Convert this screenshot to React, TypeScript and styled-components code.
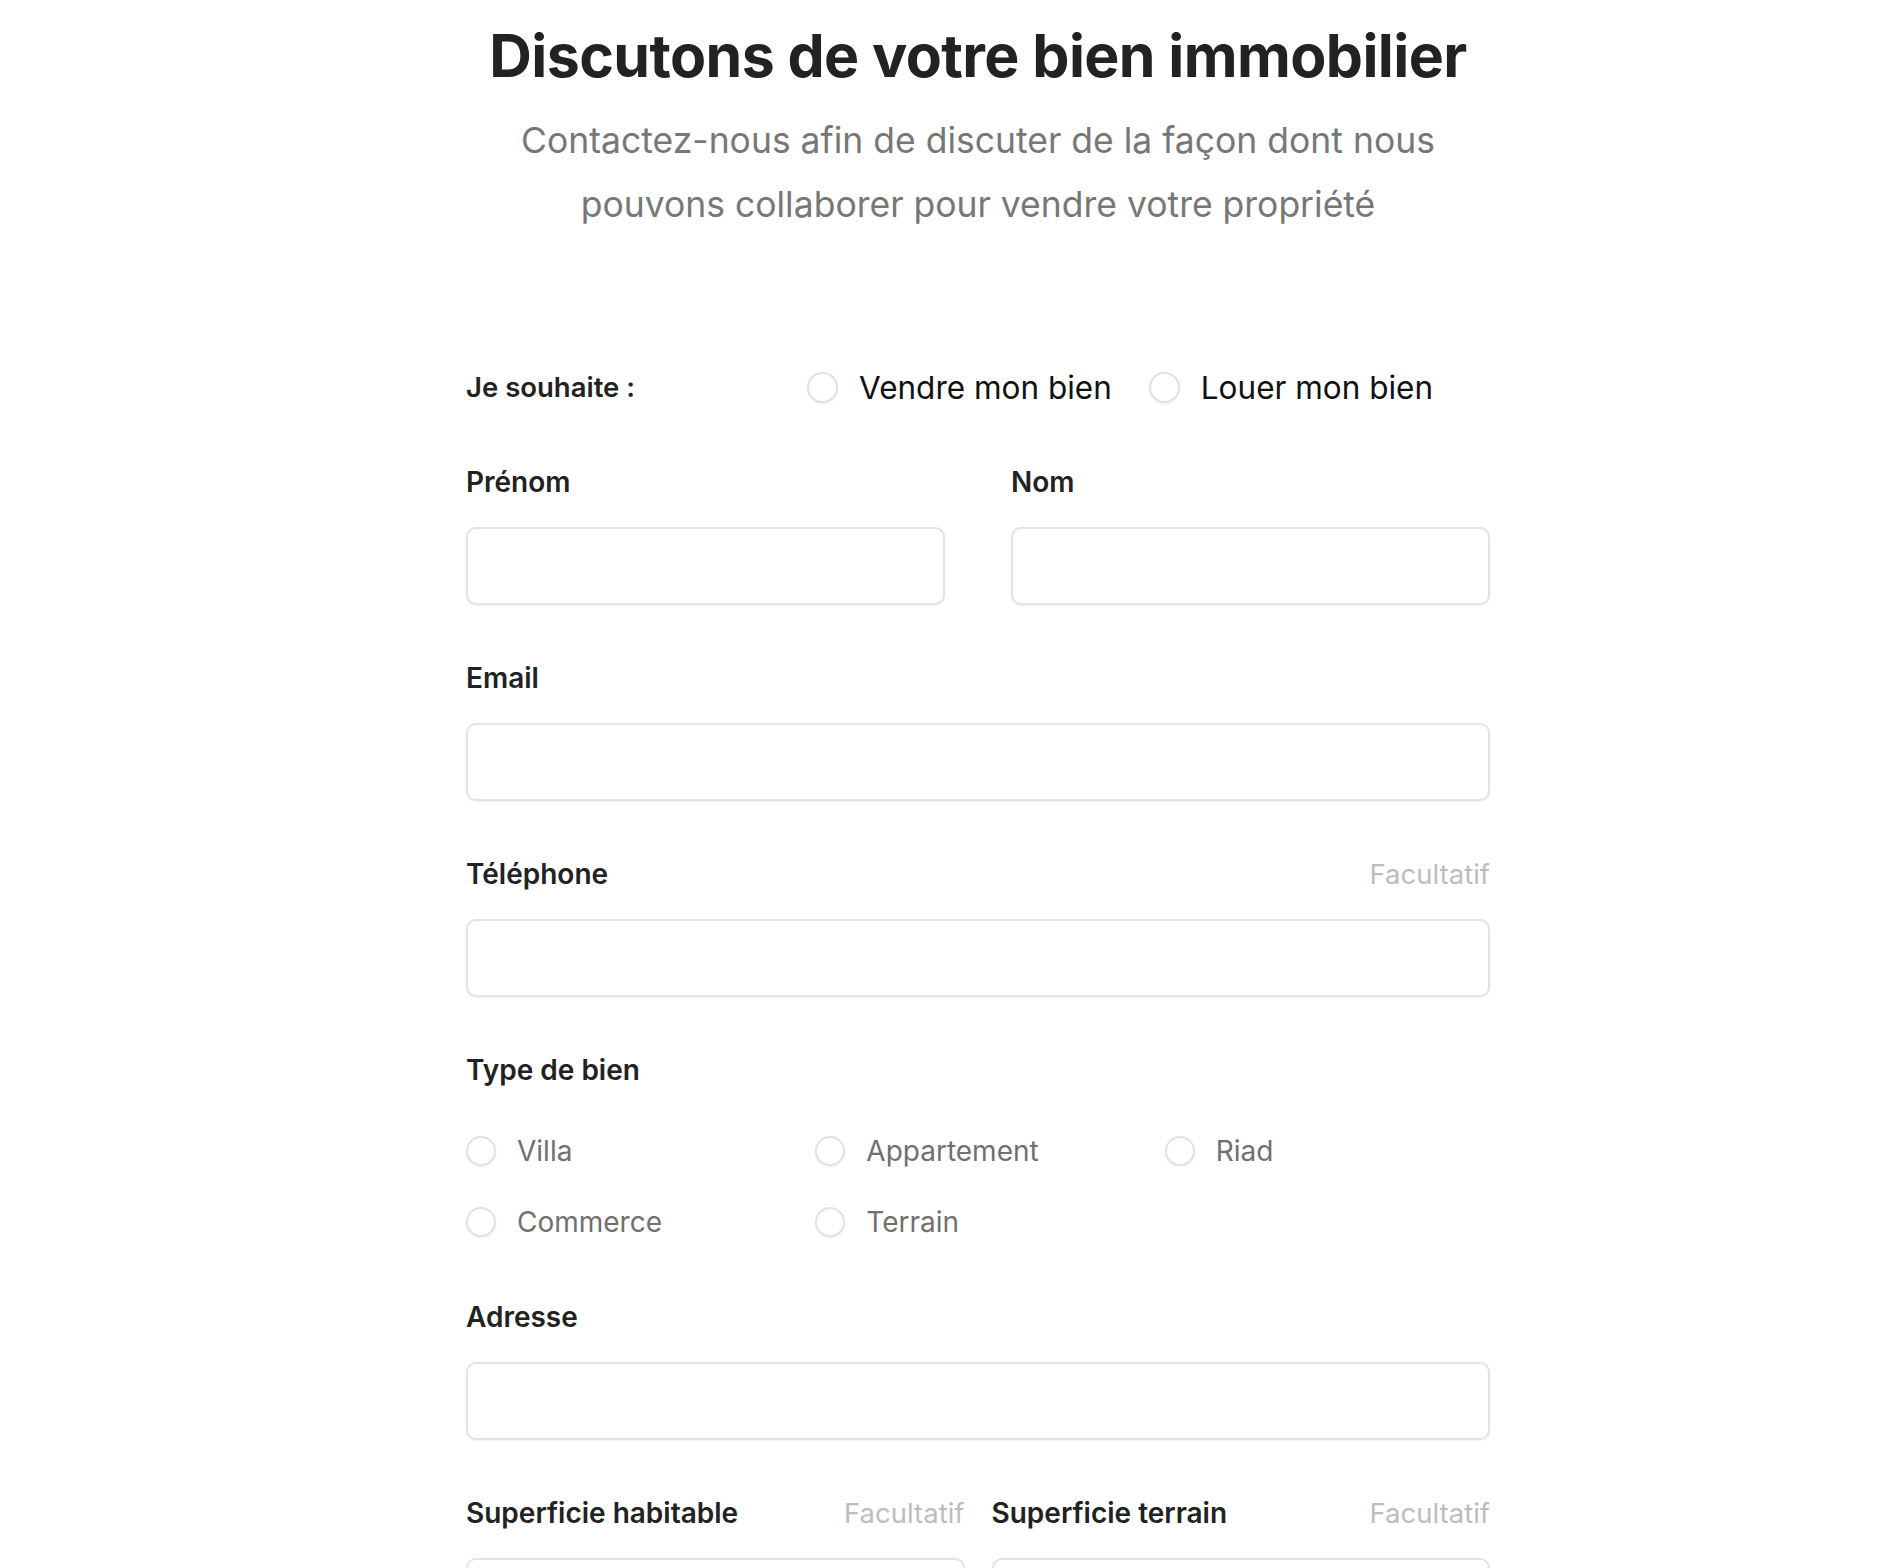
import React from "react";
import styled, { createGlobalStyle } from "styled-components";

const GlobalStyle = createGlobalStyle`
  html, body {
    margin: 0;
    padding: 0;
    background: #ffffff;
  }
  body {
    font-family: "Inter", "Liberation Sans", sans-serif;
    color: #222222;
    -webkit-font-smoothing: antialiased;
  }
  * { box-sizing: border-box; }
`;

const Page = styled.div`
  padding: 22px 0 80px 52px;
`;

const Container = styled.div`
  width: 1024px;
  margin: 0 auto;
`;

const Title = styled.h1`
  margin: 0;
  font-size: 59px;
  line-height: 68px;
  font-weight: 700;
  letter-spacing: -0.01em;
  color: #222222;
  text-align: center;
`;

const Subtitle = styled.p`
  margin: 19px 0 0;
  font-size: 35.5px;
  line-height: 64px;
  font-weight: 400;
  color: #777777;
  text-align: center;
`;

const Form = styled.form`
  margin-top: 128px;
  display: flex;
  flex-direction: column;
  gap: 56px;
`;

const IntentRow = styled.div`
  display: flex;
  align-items: center;
  height: 44px;
`;

const IntentLabel = styled.span`
  width: 341px;
  flex-shrink: 0;
  font-size: 27.5px;
  font-weight: 600;
  color: #222222;
`;

const RadioGroup = styled.div`
  display: flex;
  align-items: center;
  gap: 37px;
`;

const RadioOption = styled.label`
  display: inline-flex;
  align-items: center;
  gap: 21px;
  height: 44px;
  cursor: pointer;
`;

const RadioInput = styled.input.attrs({ type: "radio" })<{ $size: number }>`
  appearance: none;
  -webkit-appearance: none;
  margin: 0;
  width: ${(p) => p.$size}px;
  height: ${(p) => p.$size}px;
  border-radius: 50%;
  border: 2px solid #e2e2e2;
  background: #ffffff;
  box-shadow: 0 1px 2px rgba(0, 0, 0, 0.07);
  flex-shrink: 0;
`;

const RadioText = styled.span<{ $variant: "primary" | "muted" }>`
  font-size: ${(p) => (p.$variant === "primary" ? "31.5px" : "28px")};
  font-weight: 400;
  color: ${(p) => (p.$variant === "primary" ? "#111111" : "#707070")};
  white-space: nowrap;
`;

const Field = styled.div`
  display: flex;
  flex-direction: column;
  min-width: 0;
`;

const LabelRow = styled.div`
  display: flex;
  justify-content: space-between;
  align-items: center;
  height: 34px;
`;

const FieldLabel = styled.label`
  font-size: 28px;
  font-weight: 600;
  color: #222222;
  white-space: nowrap;
`;

const Optional = styled.span`
  font-size: 27.5px;
  font-weight: 400;
  color: #bdbdbd;
  white-space: nowrap;
`;

const TextInput = styled.input`
  margin-top: 28px;
  width: 100%;
  height: 78px;
  border: 2px solid #e3e3e3;
  border-radius: 10px;
  background: #ffffff;
  box-shadow: 0 1px 2px rgba(0, 0, 0, 0.06);
  padding: 0 20px;
  font-family: inherit;
  font-size: 24px;
  outline: none;
`;

const TwoCols = styled.div<{ $gap: number }>`
  display: grid;
  grid-template-columns: 1fr 1fr;
  column-gap: ${(p) => p.$gap}px;
`;

const TypeGroup = styled.div`
  display: flex;
  flex-direction: column;
`;

const TypeGrid = styled.div`
  margin-top: 42px;
  display: grid;
  grid-template-columns: repeat(3, 1fr);
  column-gap: 24px;
  row-gap: 27px;
`;

type TextFieldProps = { label: string; optional?: boolean; id: string; type?: string };

const TextField = ({ label, optional, id, type = "text" }: TextFieldProps) => (
  <Field>
    <LabelRow>
      <FieldLabel htmlFor={id}>{label}</FieldLabel>
      {optional && <Optional>Facultatif</Optional>}
    </LabelRow>
    <TextInput id={id} type={type} />
  </Field>
);

const propertyTypes = ["Villa", "Appartement", "Riad", "Commerce", "Terrain"];

export default function App() {
  return (
    <>
      <GlobalStyle />
      <Page>
        <Container>
          <Title>Discutons de votre bien immobilier</Title>
          <Subtitle>
            Contactez-nous afin de discuter de la façon dont nous
            <br />
            pouvons collaborer pour vendre votre propriété
          </Subtitle>
          <Form onSubmit={(e) => e.preventDefault()}>
            <IntentRow>
              <IntentLabel>Je souhaite :</IntentLabel>
              <RadioGroup>
                <RadioOption>
                  <RadioInput $size={31} name="intent" value="vendre" />
                  <RadioText $variant="primary">Vendre mon bien</RadioText>
                </RadioOption>
                <RadioOption>
                  <RadioInput $size={31} name="intent" value="louer" />
                  <RadioText $variant="primary">Louer mon bien</RadioText>
                </RadioOption>
              </RadioGroup>
            </IntentRow>

            <TwoCols $gap={66}>
              <TextField id="prenom" label="Prénom" />
              <TextField id="nom" label="Nom" />
            </TwoCols>

            <TextField id="email" label="Email" type="email" />
            <TextField id="tel" label="Téléphone" optional type="tel" />

            <TypeGroup>
              <LabelRow>
                <FieldLabel>Type de bien</FieldLabel>
              </LabelRow>
              <TypeGrid>
                {propertyTypes.map((t) => (
                  <RadioOption key={t}>
                    <RadioInput $size={30} name="type" value={t} />
                    <RadioText $variant="muted">{t}</RadioText>
                  </RadioOption>
                ))}
              </TypeGrid>
            </TypeGroup>

            <TextField id="adresse" label="Adresse" />

            <TwoCols $gap={27}>
              <TextField id="sup-hab" label="Superficie habitable" optional />
              <TextField id="sup-ter" label="Superficie terrain" optional />
            </TwoCols>
          </Form>
        </Container>
      </Page>
    </>
  );
}
